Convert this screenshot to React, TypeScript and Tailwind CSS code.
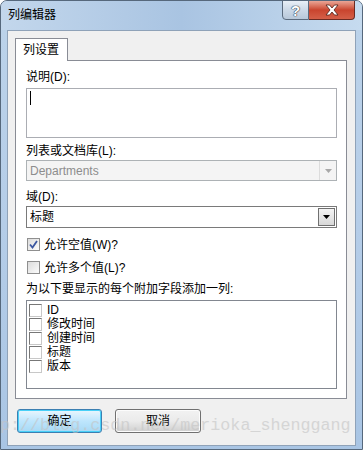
import React from "react";

const ui = "font-['Liberation_Sans','Noto_Sans_CJK_SC',sans-serif] text-[12px] leading-[14px] text-black";

function Check({ checked = false }: { checked?: boolean }) {
  return (
    <span className="flex h-[13px] w-[13px] items-center justify-center border border-[#8f8f8f] bg-gradient-to-br from-[#dcdcdc] to-[#fbfbfb]">
      {checked && (
        <svg width="9" height="9" viewBox="0 0 9 9">
          <path d="M1 4.5 L3.5 7.5 L8 1" fill="none" stroke="#3a56a0" strokeWidth="1.8" />
        </svg>
      )}
    </span>
  );
}

function ListItem({ label }: { label: string }) {
  return (
    <div className="flex h-[14px] items-center gap-[5px]">
      <span className="h-[13px] w-[13px] border border-t-[#777] border-l-[#777] border-r-[#c8c8c8] border-b-[#c8c8c8] bg-white" />
      <span>{label}</span>
    </div>
  );
}

export default function App() {
  return (
    <div className={`${ui} relative flex h-[450px] w-[363px] flex-col overflow-hidden rounded-t-[7px] border border-[#56687c] bg-gradient-to-b from-[#bcd3ea] via-[#b5cde8] to-[#a9c5e4]`}>
      {/* title bar */}
      <div className="flex h-[29px] items-start justify-between bg-gradient-to-r from-[#c3d7ec] via-[#a9c4e2] to-[#c6dbef]">
        <span className="ml-[7px] mt-[7px] text-[12px]">列编辑器</span>
        <div className="mr-[7px] -mt-px flex">
          <div className="flex h-[20px] w-[27px] items-center justify-center rounded-bl-[4px] border border-[#5b6b7e] bg-gradient-to-b from-[#e8eff7] via-[#ccd9e7] to-[#b8c8da]">
            <span className="text-[15px] font-bold leading-none text-white [text-shadow:0_0_1px_#2d3a4a,0_0_1px_#2d3a4a,0_0_1px_#2d3a4a]">?</span>
          </div>
          <div className="flex h-[20px] w-[46px] items-center justify-center rounded-br-[4px] border border-l-0 border-[#6b2a22] bg-gradient-to-b from-[#e9a596] via-[#c9442e] to-[#d45f48]">
            <svg width="16" height="12" viewBox="0 0 16 12">
              <path d="M2 1 L5.5 1 L8 4 L10.5 1 L14 1 L10 6 L14 11 L10.5 11 L8 8 L5.5 11 L2 11 L6 6 Z" fill="#fff" stroke="#4a1f18" strokeWidth="0.8" />
            </svg>
          </div>
        </div>
      </div>

      {/* client area */}
      <div className="relative mx-[6px] flex h-[416px] flex-col border border-[#8fa2b8] bg-[#f0f0f0]">
        <div className="ml-[7px] mt-[7px] flex">
          <div className="relative z-10 -mb-px flex h-[23px] w-[53px] items-center border border-b-0 border-[#898c95] bg-white pl-[7px]">
            列设置
          </div>
        </div>
        <div className="ml-[7px] flex h-[339px] w-[332px] flex-col border border-[#898c95] bg-white pl-[10px] pt-[9px]">
          <div className="w-[311px]">
            <div>说明(D):</div>
            <div className="mt-[4px] h-[50px] border border-[#abadb3] bg-white pl-[2px] pt-[2px]">
              <span className="ml-px block h-[14px] w-px bg-black" />
            </div>

            <div className="mt-[6px]">列表或文档库(L):</div>
            <div className="mt-[2px] flex h-[21px] items-center justify-between border border-[#adb2b5] bg-[#f4f4f4] pl-[3px] text-[#8d8d8d]">
              <span>Departments</span>
              <span className="flex h-[19px] w-[17px] items-center justify-center border-l border-[#dcdcdc] bg-[#f4f4f4]">
                <svg width="7" height="4" viewBox="0 0 7 4">
                  <path d="M0 0 L7 0 L3.5 4 Z" fill="#a8a8a8" />
                </svg>
              </span>
            </div>

            <div className="mt-[9px]">域(D):</div>
            <div className="mt-[2px] flex h-[22px] items-center justify-between border border-[#7a7a7a] bg-white pl-[3px]">
              <span>标题</span>
              <span className="mr-px flex h-[18px] w-[17px] items-center justify-center border border-[#707070] bg-gradient-to-b from-[#f4f4f4] to-[#d8d8d8]">
                <svg width="7" height="4" viewBox="0 0 7 4">
                  <path d="M0 0 L7 0 L3.5 4 Z" fill="#000" />
                </svg>
              </span>
            </div>

            <div className="mt-[9px] flex h-[15px] items-center gap-[4px] pl-px">
              <Check checked />
              <span>允许空值(W)?</span>
            </div>
            <div className="mt-[8px] flex h-[15px] items-center gap-[4px] pl-px">
              <Check />
              <span>允许多个值(L)?</span>
            </div>

            <div className="mt-[7px]">为以下要显示的每个附加字段添加一列:</div>
            <div className="mt-[4px] flex h-[89px] flex-col border border-[#828790] bg-white pl-[2px] pt-[2px]">
              <ListItem label="ID" />
              <ListItem label="修改时间" />
              <ListItem label="创建时间" />
              <ListItem label="标题" />
              <ListItem label="版本" />
            </div>
          </div>
        </div>

        <div className="ml-[9px] mt-[10px] flex gap-[13px]">
          <button className="flex h-[24px] w-[85px] items-center justify-center rounded-[3px] border border-[#3c7fb1] bg-gradient-to-b from-[#eaf6fd] via-[#bee6fd] to-[#a7d9f5] shadow-[inset_0_0_0_1px_#48d0f8]">
            确定
          </button>
          <button className="flex h-[24px] w-[86px] items-center justify-center rounded-[3px] border border-[#707070] bg-gradient-to-b from-[#f2f2f2] via-[#ebebeb] to-[#cfcfcf] shadow-[inset_0_0_0_1px_#fcfcfc]">
            取消
          </button>
        </div>
      </div>

      {/* watermark */}
      <div className="pointer-events-none absolute left-[-31px] top-[415px] whitespace-nowrap font-['Liberation_Mono',monospace] text-[16.7px] leading-[20px] text-[#c4c4c4] opacity-60">
        http://blog.csdn.net/merioka_shenggang
      </div>
    </div>
  );
}
